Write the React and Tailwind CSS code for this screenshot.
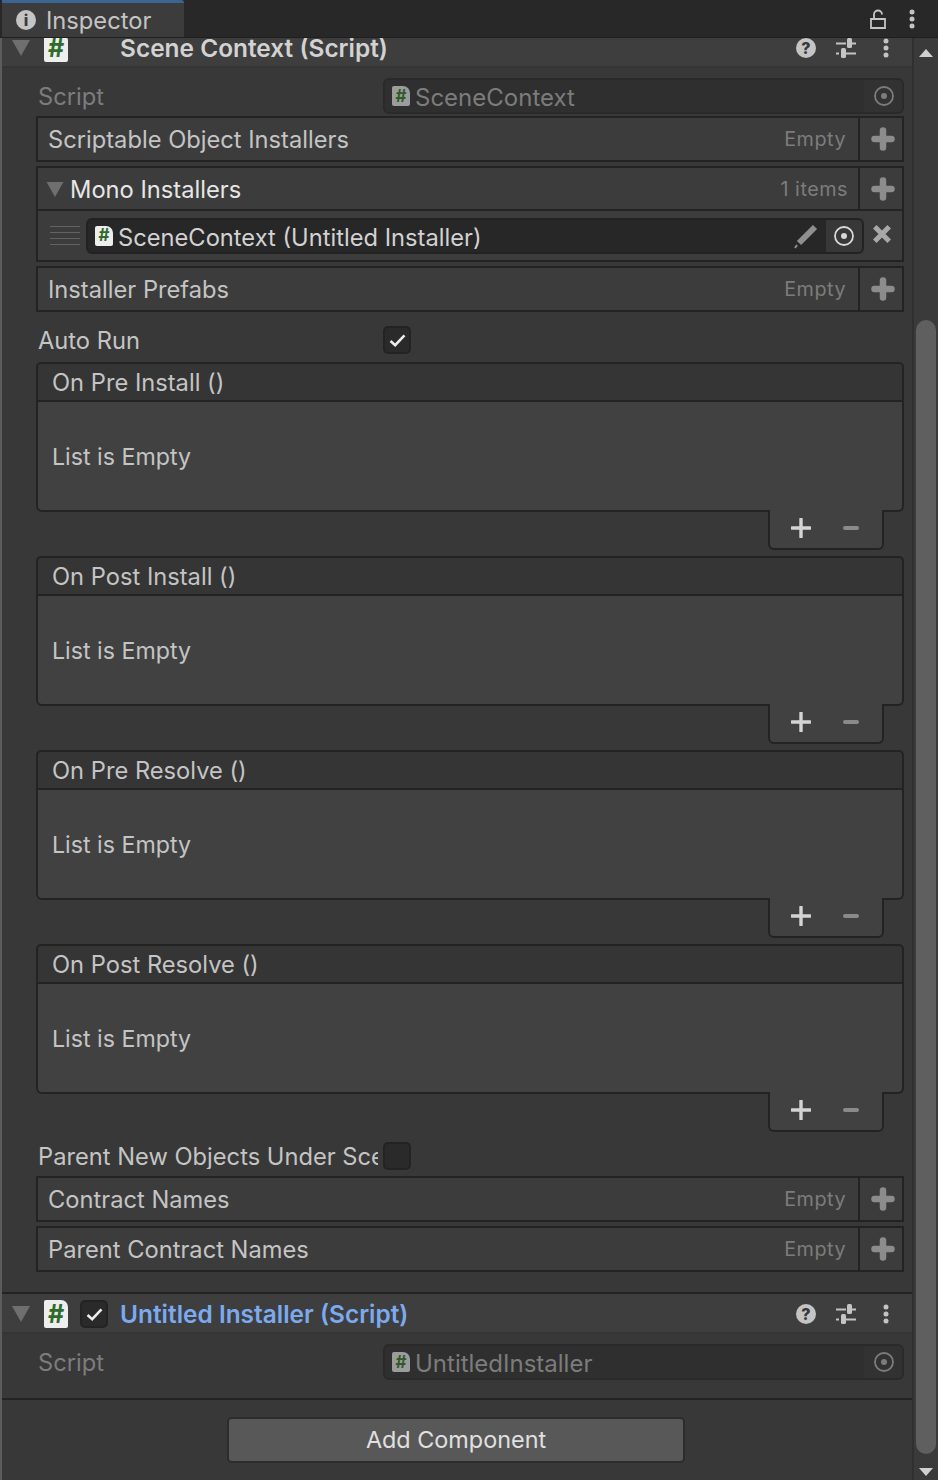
// Unity inspector panel: Scene Context + Untitled Installer
import React from 'react';

function Triangle({ className }) {
  return (
    <svg viewBox="0 0 18 16" className={className}>
      <path d="M0 0H18L9 16Z" fill="#6f6f6f" />
    </svg>
  );
}

function ScriptIcon({ dim, small }) {
  const box = small ? 'w-[18px] h-[20px] text-[17px]' : 'w-[24px] h-[28px] text-[25px]';
  const fill = dim ? 'bg-[#9c9c9c] text-[#2f5a2a]' : 'bg-[#eeeeee] text-[#2f6b2b]';
  return (
    <div
      className={`${box} ${fill} shrink-0 flex items-center justify-center font-bold leading-none rounded-[2px] rounded-tr-[7px]`}
    >
      #
    </div>
  );
}

function Check({ on }) {
  return (
    <div className="w-[28px] h-[28px] shrink-0 flex items-center justify-center rounded-[5px] bg-[#2a2a2a] border-2 border-[#232323]">
      {on && (
        <svg viewBox="0 0 18 14" className="w-[17px] h-[13px]">
          <path d="M1.5 7.5 6.5 12 16.5 1.5" fill="none" stroke="#ececec" strokeWidth="2.8" />
        </svg>
      )}
    </div>
  );
}

function Kebab({ className }) {
  return (
    <svg viewBox="0 0 6 20" className={className}>
      <circle cx="3" cy="3" r="2.5" fill="#c4c4c4" />
      <circle cx="3" cy="10" r="2.5" fill="#c4c4c4" />
      <circle cx="3" cy="17" r="2.5" fill="#c4c4c4" />
    </svg>
  );
}

function HelpIcon() {
  return (
    <div className="w-[20px] h-[20px] rounded-full bg-[#c4c4c4] text-[#383838] flex items-center justify-center text-[16px] font-extrabold leading-none">
      ?
    </div>
  );
}

function SlidersIcon() {
  return (
    <svg viewBox="0 0 20 20" className="w-[20px] h-[20px]">
      <path d="M0 5.5H10M15 5.5H20M0 15.5H3M8 15.5H20" stroke="#c4c4c4" strokeWidth="2" fill="none" />
      <rect x="11" y="0" width="5" height="10" rx="1.5" fill="#c4c4c4" />
      <rect x="5" y="10" width="5" height="10" rx="1.5" fill="#c4c4c4" />
    </svg>
  );
}

function Target({ color, dot }) {
  return (
    <svg viewBox="0 0 20 20" className="w-[20px] h-[20px]">
      <circle cx="10" cy="10" r="9" fill="none" stroke={color} strokeWidth="1.8" />
      <circle cx="10" cy="10" r="3" fill={dot} />
    </svg>
  );
}

function ThickPlus() {
  return (
    <svg viewBox="0 0 24 24" className="ml-[3px] w-[24px] h-[24px]">
      <path d="M12 3.5V20.5M3.5 12H20.5" stroke="#8c8c8c" strokeWidth="6.5" strokeLinecap="round" fill="none" />
    </svg>
  );
}

function ComponentHeader({ title, blue, check, clipped }) {
  return (
    <div
      className={`flex flex-col justify-end overflow-hidden bg-[#3e3e3e] border-b-2 border-[#353535] ${clipped ? 'h-[30px]' : 'h-[40px]'}`}
    >
      <div className="h-[36px] shrink-0 flex items-center pl-[10px] pr-[23px]">
        <Triangle className="w-[18px] h-[16px] mb-[1px]" />
        <div className="ml-[14px]">
          <ScriptIcon />
        </div>
        <div className="w-[12px] shrink-0" />
        <div className="w-[28px] shrink-0">{check && <Check on />}</div>
        <div
          className={`ml-[12px] text-[24.45px] font-semibold whitespace-nowrap ${blue ? 'text-[#7baaf0]' : 'text-[#d2d2d2]'}`}
        >
          {title}
        </div>
        <div className="ml-auto flex items-center">
          <HelpIcon />
          <div className="ml-[20px]">
            <SlidersIcon />
          </div>
          <Kebab className="ml-[27px] w-[6px] h-[20px]" />
        </div>
      </div>
    </div>
  );
}

function ScriptRow({ name, mt }) {
  return (
    <div className={`flex items-center h-[36px] ml-[34px] mr-[8px] ${mt}`}>
      <div className="w-[347px] pl-[2px] pt-[2px] text-[#7c7c7c]">Script</div>
      <div className="flex-1 h-full flex items-center rounded-[6px] bg-[#2f2f2f] border-2 border-[#2a2a2a] overflow-hidden">
        <div className="ml-[7px] mr-[5px]">
          <ScriptIcon dim small />
        </div>
        <div className="pt-[3px] text-[24px] text-[#7c7c7c]">{name}</div>
        <div className="ml-auto h-full w-[38px] pl-[2px] flex items-center justify-center bg-[#323232]">
          <Target color="#7c7c7c" dot="#7c7c7c" />
        </div>
      </div>
    </div>
  );
}

function ListBox({ label, mt }) {
  return (
    <div className={`flex h-[46px] ml-[34px] mr-[8px] bg-[#3c3c3c] border-2 border-[#232323] ${mt}`}>
      <div className="flex-1 flex items-center pl-[10px] pr-[12px] pt-[1px] text-[#c4c4c4]">
        {label}
        <span className="ml-auto text-[19.8px] tracking-[0.5px] text-[#7c7c7c]">Empty</span>
      </div>
      <div className="w-[44px] flex items-center justify-center border-l-2 border-[#232323]">
        <ThickPlus />
      </div>
    </div>
  );
}

function MonoInstallers() {
  return (
    <div className="ml-[34px] mr-[8px] mt-[4px] bg-[#3c3c3c] border-2 border-[#232323]">
      <div className="flex h-[43px] border-b-2 border-[#232323]">
        <div className="flex-1 flex items-center pl-[8px] pr-[10px] pt-[2px] text-[#e6e6e6]">
          <Triangle className="w-[18px] h-[15px]" />
          <span className="ml-[6px]">Mono Installers</span>
          <span className="ml-auto text-[19.8px] tracking-[0.5px] text-[#7c7c7c]">1 items</span>
        </div>
        <div className="w-[44px] flex items-center justify-center border-l-2 border-[#232323]">
          <ThickPlus />
        </div>
      </div>
      <div className="flex items-center h-[49px]">
        <div className="ml-[12px] w-[30px] flex flex-col gap-[5px]">
          <div className="h-px bg-[#626262]" />
          <div className="h-px bg-[#626262]" />
          <div className="h-px bg-[#626262]" />
          <div className="h-px bg-[#626262]" />
        </div>
        <div className="ml-[6px] w-[778px] h-[36px] flex items-center rounded-[6px] bg-[#272727] border-2 border-[#222222] overflow-hidden">
          <div className="ml-[7px] mr-[5px]">
            <ScriptIcon small />
          </div>
          <span className="pt-[5px] text-[#d2d2d2]">SceneContext (Untitled Installer)</span>
          <svg viewBox="0 0 26 26" className="ml-auto mr-[6px] w-[26px] h-[26px]">
            <path d="M5 20 21 4" stroke="#8f8f8f" strokeWidth="6" fill="none" />
            <path d="M1 25 3 22" stroke="#8f8f8f" strokeWidth="2" fill="none" />
          </svg>
          <div className="w-[36px] h-full flex items-center justify-center bg-[#383838]">
            <Target color="#d8d8d8" dot="#d8d8d8" />
          </div>
        </div>
        <svg viewBox="0 0 18 18" className="ml-[8px] w-[20px] h-[20px] mb-[4px]">
          <path d="M2.5 2.5 15.5 15.5M15.5 2.5 2.5 15.5" stroke="#a8a8a8" strokeWidth="4.5" fill="none" />
        </svg>
      </div>
    </div>
  );
}

function EventBox({ title, mt }) {
  return (
    <div className={`ml-[34px] mr-[8px] flex flex-col ${mt}`}>
      <div className="h-[40px] flex items-center pl-[14px] pt-[2px] bg-[#353535] border-2 border-b-[2px] border-[#232323] rounded-t-[5px] text-[#c4c4c4]">
        {title}
      </div>
      <div className="h-[110px] flex items-center pl-[14px] pt-[3px] bg-[#414141] border-2 border-t-0 border-[#232323] rounded-b-[6px] text-[23.2px] text-[#c4c4c4]">
        List is Empty
      </div>
      <div className="self-end mr-[20px] -mt-[2px] w-[116px] h-[40px] pb-[2px] flex items-center bg-[#414141] border-2 border-t-0 border-[#232323] rounded-b-[6px]">
        <svg viewBox="0 0 20 20" className="ml-[21px] w-[20px] h-[20px]">
          <path d="M10 1V19M1 10H19" stroke="#d4d4d4" strokeWidth="3.4" strokeLinecap="round" fill="none" />
        </svg>
        <svg viewBox="0 0 16 4" className="ml-[32px] w-[16px] h-[4px]">
          <rect width="16" height="4" rx="2" fill="#8a8a8a" />
        </svg>
      </div>
    </div>
  );
}

function CheckRow({ label, on, mt }) {
  return (
    <div className={`flex items-center h-[28px] ml-[36px] ${mt}`}>
      <div className="w-[340px] pt-[2px] overflow-hidden whitespace-nowrap text-[#c4c4c4]">{label}</div>
      <div className="ml-[5px]">
        <Check on={on} />
      </div>
    </div>
  );
}

export default function App() {
  return (
    <div className="w-[938px] h-[1480px] overflow-hidden flex flex-col bg-[#383838] font-['Inter',sans-serif] text-[23.7px] leading-none">
      {/* tab strip */}
      <div className="h-[38px] shrink-0 flex items-stretch bg-[#282828] border-b border-[#1f1f1f]">
        <div className="ml-[2px] w-[182px] flex items-center pl-[14px] bg-[#3c3c3c] border-t-[3px] border-[#3a6592] rounded-tr-[3px]">
          <div className="w-[20px] h-[20px] rounded-full bg-[#c4c4c4] text-[#3c3c3c] flex items-center justify-center text-[16px] font-extrabold">
            i
          </div>
          <span className="ml-[10px] pt-[2px] text-[#c4c4c4]">Inspector</span>
        </div>
        <div className="ml-auto flex items-center pr-[23px]">
          <svg viewBox="0 0 16 20" className="w-[16px] h-[20px]">
            <path d="M1 10H15V19H1ZM4 10V5.5A4 4 0 0 1 12 5.5" fill="none" stroke="#c4c4c4" strokeWidth="1.8" />
          </svg>
          <Kebab className="ml-[23px] w-[6px] h-[20px]" />
        </div>
      </div>

      <div className="flex-1 flex min-h-0">
        <div className="w-[2px] bg-[#5c5c5c]" />

        <div className="w-[910px] flex flex-col">
          <ComponentHeader title="Scene Context (Script)" clipped />
          <ScriptRow name="SceneContext" mt="mt-[10px]" />
          <ListBox label="Scriptable Object Installers" mt="mt-[2px]" />
          <MonoInstallers />
          <ListBox label="Installer Prefabs" mt="mt-[4px]" />
          <CheckRow label="Auto Run" on mt="mt-[14px]" />
          <EventBox title="On Pre Install ()" mt="mt-[8px]" />
          <EventBox title="On Post Install ()" mt="mt-[6px]" />
          <EventBox title="On Pre Resolve ()" mt="mt-[6px]" />
          <EventBox title="On Post Resolve ()" mt="mt-[6px]" />
          <CheckRow label="Parent New Objects Under Scene Context" mt="mt-[10px]" />
          <ListBox label="Contract Names" mt="mt-[6px]" />
          <ListBox label="Parent Contract Names" mt="mt-[4px]" />

          <div className="mt-[20px] border-t-2 border-[#232323]">
            <ComponentHeader title="Untitled Installer (Script)" blue check />
          </div>
          <ScriptRow name="UntitledInstaller" mt="mt-[10px]" />
          <div className="mt-[18px] border-t-2 border-[#232323]" />
          <button className="mt-[17px] ml-[225px] w-[458px] h-[46px] rounded-[5px] bg-[#585858] border-2 border-[#2c2c2c] text-[23.4px] text-[#e0e0e0]">
            Add Component
          </button>
        </div>

        {/* scrollbar */}
        <div className="flex-1 flex flex-col items-center bg-[#3a3a3a] border-l-2 border-[#303030]">
          <svg viewBox="0 0 14 8" className="mt-[11px] w-[14px] h-[8px] shrink-0">
            <path d="M0 8H14L7 0Z" fill="#d0d0d0" />
          </svg>
          <div className="mt-[263px] w-[20px] h-[1134px] rounded-full bg-[#5f5f5f] shrink-0" />
          <svg viewBox="0 0 14 8" className="mt-[14px] w-[14px] h-[8px] shrink-0">
            <path d="M0 0H14L7 8Z" fill="#d0d0d0" />
          </svg>
        </div>
      </div>
    </div>
  );
}
